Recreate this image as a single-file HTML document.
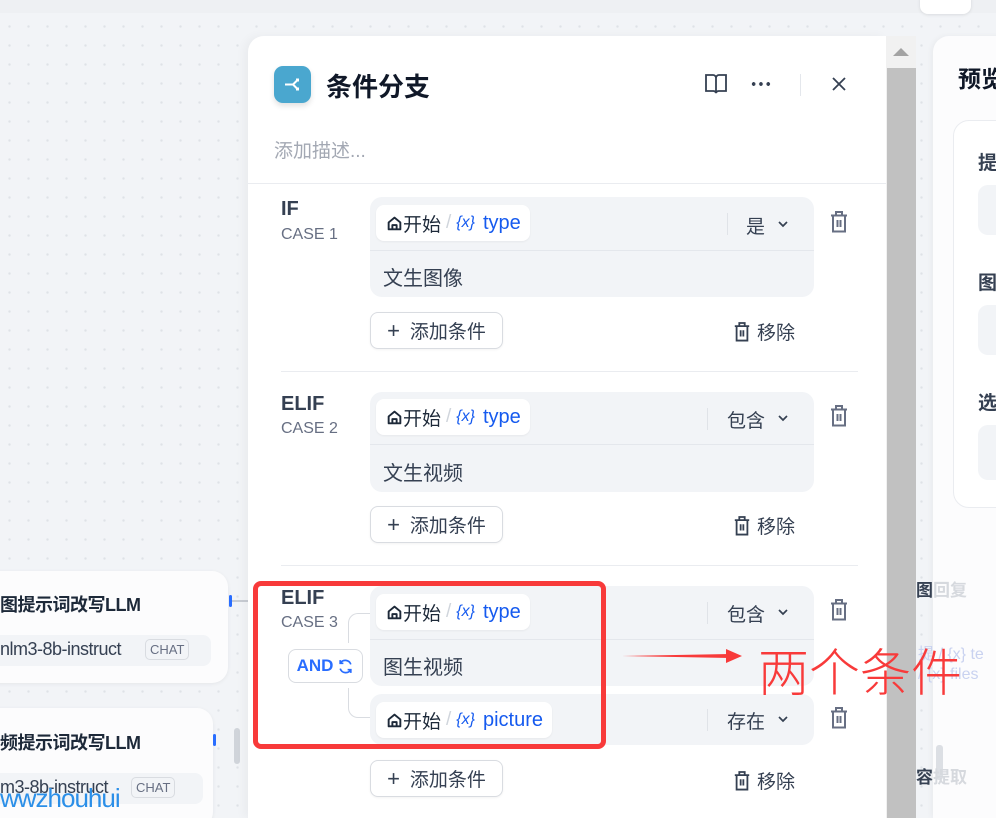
<!DOCTYPE html>
<html style="overflow:hidden;width:996px;height:818px"><head><meta charset="utf-8"><style>
*{margin:0;padding:0;box-sizing:border-box}
body{width:996px;height:818px;overflow:hidden;position:relative;font-family:"Liberation Sans","Noto Sans CJK SC",sans-serif;background:#f2f4f7;background-image:radial-gradient(#dfe2e7 1.2px,transparent 1.3px);background-size:19px 19px;background-position:0 -2px;color:#1d2939}
.a{position:absolute;white-space:nowrap}
.panel{left:248px;top:36px;width:638px;height:782px;background:#fff;border-top-left-radius:16px;box-shadow:-4px 0 10px rgba(0,0,0,.04)}
.lbl{font-weight:bold;font-size:20px;color:#354052}
.case{font-size:16px;color:#676f83}
.box{left:370px;width:444px;background:#f2f4f7;border-radius:12px}
.chip{background:#fff;border-radius:8px;height:36px;display:flex;align-items:center;padding:0 9px 0 10px;font-size:19px;box-shadow:0 1px 2px rgba(0,0,0,.05)}
.chip .sl{color:#d0d5dc;margin:0 5px}
.chip .x{color:#155aef;font-size:16px;margin-right:8px;font-style:italic}
.chip .v{color:#155aef;font-size:20px}
.op{font-size:19px;color:#354052}
.val{font-size:20px;color:#354052}
.btn{left:370px;width:133px;height:37px;border:1px solid #d9dce1;border-radius:8px;background:#fff;font-size:19px;color:#354052;display:flex;align-items:center;justify-content:center;box-shadow:0 1px 2px rgba(0,0,0,.05)}
.rm{font-size:19px;color:#354052;display:flex;align-items:center;gap:6px}
.sep{left:281px;width:577px;height:1px;background:#eaecf0}
.vd{width:1px;height:22px;background:#e0e3e8}
</style></head><body>
<svg width="0" height="0" style="position:absolute"><defs>
<symbol id="home" viewBox="0 0 16 16"><path d="M2.5 7 8 2.5 13.5 7v6.5h-11z M6 13.5V9.5h4v4" fill="none" stroke="#1d2939" stroke-width="1.8" stroke-linejoin="round"/></symbol>
<symbol id="trash" viewBox="0 0 20 24"><path d="M2 5.5h16M7 5.5V2h6v3.5M4 5.5v16h12v-16M8.5 10v7M11.5 10v7" fill="none" stroke="#676f83" stroke-width="2"/></symbol>
<symbol id="trash2" viewBox="0 0 20 24"><path d="M2 5.5h16M7 5.5V2h6v3.5M4 5.5v16h12v-16M8.5 10v7M11.5 10v7" fill="none" stroke="#354052" stroke-width="2"/></symbol>
<symbol id="chev" viewBox="0 0 12 12"><path d="M2 4 6 8l4-4" fill="none" stroke="#354052" stroke-width="1.7"/></symbol>
</defs></svg>

<div class="a" style="left:0;top:0;width:996px;height:13px;background:#eef0f3"></div>
<div class="a" style="left:920px;top:-8px;width:51px;height:22px;background:#fff;border-radius:8px;box-shadow:0 1px 3px rgba(0,0,0,.1)"></div>

<!-- left nodes -->
<div class="a" style="left:-20px;top:571px;width:248px;height:112px;background:#fcfcfd;border-radius:16px;box-shadow:0 1px 4px rgba(0,0,0,.06)"></div>
<div class="a" style="left:0;top:591px;font-weight:bold;font-size:18px;color:#1d2939;letter-spacing:-0.5px">图提示词改写LLM</div>
<div class="a" style="left:-10px;top:635px;width:221px;height:31px;background:#f2f4f7;border-radius:8px"></div>
<div class="a" style="left:0;top:639px;font-size:18px;color:#354052;letter-spacing:-0.5px">nlm3-8b-instruct</div>
<div class="a" style="left:145px;top:639px;border:1px solid #d9dce1;border-radius:5px;font-size:13px;color:#676f83;padding:2px 4px">CHAT</div>
<div class="a" style="left:229px;top:595px;width:3px;height:12px;background:#296dff;border-radius:2px"></div>
<div class="a" style="left:232px;top:600px;width:16px;height:2px;background:#c8ccd3"></div>

<div class="a" style="left:-20px;top:708px;width:233px;height:120px;background:#fcfcfd;border-radius:16px;box-shadow:0 1px 4px rgba(0,0,0,.06)"></div>
<div class="a" style="left:0;top:729px;font-weight:bold;font-size:18px;color:#1d2939;letter-spacing:-0.5px">频提示词改写LLM</div>
<div class="a" style="left:-10px;top:773px;width:213px;height:31px;background:#f2f4f7;border-radius:8px"></div>
<div class="a" style="left:0;top:777px;font-size:18px;color:#354052;letter-spacing:-0.5px">m3-8b-instruct</div>
<div class="a" style="left:131px;top:777px;border:1px solid #d9dce1;border-radius:5px;font-size:13px;color:#676f83;padding:2px 4px">CHAT</div>
<div class="a" style="left:213px;top:734px;width:3px;height:12px;background:#296dff;border-radius:2px"></div>
<div class="a" style="left:234px;top:728px;width:6px;height:36px;background:#d0d4da;border-radius:3px"></div>
<div class="a" style="left:0;top:783px;font-size:26px;color:#2b8fe8;letter-spacing:-1px">wwzhouhui</div>

<!-- main panel -->
<div class="a panel"></div>
<div class="a" style="left:274px;top:66px;width:37px;height:37px;border-radius:9px;background:#4aa7cf;box-shadow:0 3px 6px rgba(0,0,0,.12)">
<svg width="37" height="37" viewBox="0 0 37 37"><path d="M11 18.5h8M19 18.5l5-5M19 18.5l5 5M22 13.5h2v2M22 23.5h2v-2" fill="none" stroke="#fff" stroke-width="2"/></svg></div>
<div class="a" style="left:326px;top:67px;font-size:26px;font-weight:bold;color:#101828">条件分支</div>
<svg class="a" style="left:704px;top:73px" width="24" height="22" viewBox="0 0 24 22"><path d="M2 2h7a3 3 0 0 1 3 3v15a3 3 0 0 0-3-2H2zM22 2h-7a3 3 0 0 0-3 3v15a3 3 0 0 1 3-2h7z" fill="none" stroke="#354052" stroke-width="1.8"/></svg>
<div class="a" style="left:750px;top:82px;width:22px;height:4px;background:radial-gradient(circle,#354052 1.8px,transparent 2px);background-size:7.3px 4px"></div>
<div class="a" style="left:800px;top:74px;width:1px;height:22px;background:#e4e7ec"></div>
<svg class="a" style="left:831px;top:76px" width="16" height="16" viewBox="0 0 16 16"><path d="M2 2l12 12M14 2 2 14" stroke="#354052" stroke-width="1.8"/></svg>
<div class="a" style="left:274px;top:136px;font-size:19px;color:#a3a8b3">添加描述...</div>
<div class="a" style="left:248px;top:183px;width:638px;height:1px;background:#eaecf0"></div>

<!-- IF -->
<div class="a lbl" style="left:281px;top:198px">IF</div>
<div class="a case" style="left:281px;top:226px">CASE 1</div>
<div class="a box" style="top:197px;height:100px"></div>
<div class="a" style="left:370px;top:250px;width:444px;height:1px;background:#e4e7ec"></div>
<div class="a chip" style="left:376px;top:205px"><svg width="17" height="17"><use href="#home"/></svg>开始<span class="sl">/</span><span class="x">{x}</span><span class="v">type</span></div>
<div class="a vd" style="left:727px;top:213px"></div>
<div class="a op" style="left:746px;top:212px">是</div>
<svg class="a" style="left:777px;top:218px" width="12" height="12"><use href="#chev"/></svg>
<svg class="a" style="left:829px;top:210px" width="20" height="24"><use href="#trash"/></svg>
<div class="a val" style="left:383px;top:262px">文生图像</div>
<div class="a btn" style="top:312px"><span style="font-size:22px;margin-right:10px">+</span>添加条件</div>
<div class="a rm" style="left:733px;top:318px"><svg width="18" height="22"><use href="#trash2"/></svg>移除</div>
<div class="a sep" style="top:371px"></div>

<!-- ELIF 2 -->
<div class="a lbl" style="left:281px;top:393px">ELIF</div>
<div class="a case" style="left:281px;top:420px">CASE 2</div>
<div class="a box" style="top:392px;height:100px"></div>
<div class="a" style="left:370px;top:444px;width:444px;height:1px;background:#e4e7ec"></div>
<div class="a chip" style="left:376px;top:399px"><svg width="17" height="17"><use href="#home"/></svg>开始<span class="sl">/</span><span class="x">{x}</span><span class="v">type</span></div>
<div class="a vd" style="left:707px;top:408px"></div>
<div class="a op" style="left:727px;top:406px">包含</div>
<svg class="a" style="left:777px;top:412px" width="12" height="12"><use href="#chev"/></svg>
<svg class="a" style="left:829px;top:404px" width="20" height="24"><use href="#trash"/></svg>
<div class="a val" style="left:383px;top:457px">文生视频</div>
<div class="a btn" style="top:506px"><span style="font-size:22px;margin-right:10px">+</span>添加条件</div>
<div class="a rm" style="left:733px;top:512px"><svg width="18" height="22"><use href="#trash2"/></svg>移除</div>
<div class="a sep" style="top:565px"></div>

<!-- ELIF 3 -->
<div class="a lbl" style="left:281px;top:587px">ELIF</div>
<div class="a case" style="left:281px;top:614px">CASE 3</div>
<div class="a" style="left:348px;top:613px;width:24px;height:30px;border-left:1px solid #d9dce1;border-top:1px solid #d9dce1;border-top-left-radius:10px"></div>
<div class="a" style="left:348px;top:688px;width:24px;height:30px;border-left:1px solid #d9dce1;border-bottom:1px solid #d9dce1;border-bottom-left-radius:10px"></div>
<div class="a" style="left:288px;top:649px;width:75px;height:34px;background:#fff;border:1px solid #d9dce1;border-radius:8px;display:flex;align-items:center;justify-content:center;font-weight:bold;font-size:17px;color:#296dff">AND<svg style="margin-left:4px" width="17" height="17" viewBox="0 0 16 16"><path d="M13 6A5.5 5.5 0 0 0 3 5M3 10a5.5 5.5 0 0 0 10 1M3 2v3h3M13 14v-3h-3" fill="none" stroke="#296dff" stroke-width="1.6"/></svg></div>
<div class="a box" style="top:586px;height:100px"></div>
<div class="a" style="left:370px;top:639px;width:444px;height:1px;background:#e4e7ec"></div>
<div class="a chip" style="left:376px;top:594px"><svg width="17" height="17"><use href="#home"/></svg>开始<span class="sl">/</span><span class="x">{x}</span><span class="v">type</span></div>
<div class="a vd" style="left:707px;top:602px"></div>
<div class="a op" style="left:727px;top:600px">包含</div>
<svg class="a" style="left:777px;top:606px" width="12" height="12"><use href="#chev"/></svg>
<svg class="a" style="left:829px;top:598px" width="20" height="24"><use href="#trash"/></svg>
<div class="a val" style="left:383px;top:651px">图生视频</div>
<div class="a box" style="top:694px;height:51px"></div>
<div class="a chip" style="left:376px;top:702px"><svg width="17" height="17"><use href="#home"/></svg>开始<span class="sl">/</span><span class="x">{x}</span><span class="v">picture</span></div>
<div class="a vd" style="left:707px;top:709px"></div>
<div class="a op" style="left:727px;top:707px">存在</div>
<svg class="a" style="left:777px;top:713px" width="12" height="12"><use href="#chev"/></svg>
<svg class="a" style="left:829px;top:706px" width="20" height="24"><use href="#trash"/></svg>
<div class="a btn" style="top:760px"><span style="font-size:22px;margin-right:10px">+</span>添加条件</div>
<div class="a rm" style="left:733px;top:767px"><svg width="18" height="22"><use href="#trash2"/></svg>移除</div>

<!-- scrollbar -->
<div class="a" style="left:886px;top:36px;width:30px;height:782px;background:#f1f1f1"></div>
<div class="a" style="left:887px;top:68px;width:29px;height:750px;background:#c1c1c1"></div>
<svg class="a" style="left:892px;top:47px" width="18" height="10"><path d="M1 9 9 1l8 8z" fill="#a3a3a3"/></svg>

<!-- right panel -->
<div class="a" style="left:933px;top:36px;width:80px;height:782px;background:#fcfcfd;border-top-left-radius:16px;box-shadow:-2px 0 6px rgba(0,0,0,.04)"></div>
<div class="a" style="left:958px;top:60px;font-size:23px;font-weight:bold;color:#101828">预览</div>
<div class="a" style="left:953px;top:120px;width:60px;height:388px;background:#fff;border:1px solid #eaecf0;border-radius:16px"></div>
<div class="a" style="left:978px;top:148px;font-size:19px;font-weight:bold;color:#354052">提</div>
<div class="a" style="left:978px;top:185px;width:30px;height:50px;background:#f2f4f7;border-radius:10px"></div>
<div class="a" style="left:978px;top:268px;font-size:19px;font-weight:bold;color:#354052">图</div>
<div class="a" style="left:978px;top:305px;width:30px;height:50px;background:#f2f4f7;border-radius:10px"></div>
<div class="a" style="left:978px;top:388px;font-size:19px;font-weight:bold;color:#354052">选</div>
<div class="a" style="left:978px;top:425px;width:30px;height:55px;background:#f2f4f7;border-radius:10px"></div>
<div class="a" style="left:916px;top:576px;font-size:17px;font-weight:bold;color:#354052">图<span style="color:#d6d9de">回复</span></div>
<div class="a" style="left:918px;top:640px;font-size:16px;color:#c9d2f0">提 / {x} te</div>
<div class="a" style="left:918px;top:666px;font-size:16px;color:#c9d2f0">/ {x} files</div>
<div class="a" style="left:936px;top:745px;width:7px;height:35px;background:#dcdfe4;border-radius:3px"></div>
<div class="a" style="left:916px;top:763px;font-size:17px;font-weight:bold;color:#354052">容<span style="color:#d6d9de">提取</span></div>

<!-- annotation (on top) -->
<div class="a" style="left:253px;top:581px;width:353px;height:168px;border:5px solid #f83a3a;border-radius:8px;z-index:5"></div>
<svg class="a" style="left:620px;top:646px;z-index:5" width="125" height="20"><path d="M2 10 L110 8 L110 12 Z" fill="#f83a3a"/><path d="M106 3 L122 10 L106 17 Z" fill="#f83a3a"/></svg>
<div class="a" style="left:758px;top:638px;font-size:51px;color:#f83a3a;line-height:62px;font-family:'Noto Sans CJK SC',sans-serif;font-weight:300;z-index:5">两个条件</div>
</body></html>
